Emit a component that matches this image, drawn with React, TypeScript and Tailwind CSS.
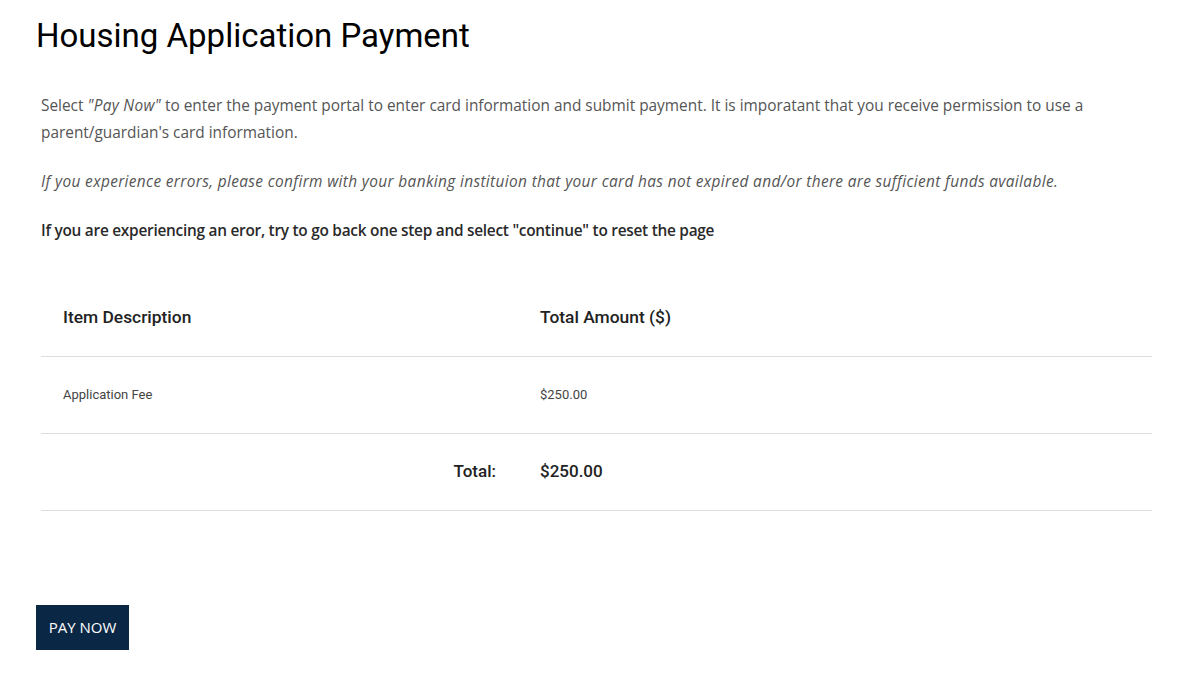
export default function App() {
  return (
    <div className="min-h-screen bg-white px-9 pt-[14px] font-['Open_Sans',sans-serif]">
      <h1 className="font-['Roboto',sans-serif] text-[33px] font-normal leading-[44px] text-black">
        Housing Application Payment
      </h1>

      <div className="mt-[34px] pl-[5px] text-[15.4px] text-[#555]">
        <p className="leading-[27px]">
          Select <em className="tracking-[0.3px]">"Pay Now"</em> to enter the payment portal to enter card information and submit payment. It is imporatant that you receive permission to use a parent/guardian's card information.
        </p>
        <p className="mt-[22px] italic leading-[27px] tracking-[0.36px]">
          If you experience errors, please confirm with your banking instituion that your card has not expired and/or there are sufficient funds available.
        </p>
        <p className="mt-[22px] font-semibold leading-[27px] tracking-[-0.26px] text-[#2a2a2a]">
          If you are experiencing an eror, try to go back one step and select "continue" to reset the page
        </p>
      </div>

      <table className="mt-[35px] ml-[5px] w-[1111px] border-collapse font-['Roboto',sans-serif]">
        <thead>
          <tr className="border-b border-[#ddd]">
            <th className="h-[77px] w-[477px] pl-[22px] text-left text-[17.4px] font-medium text-[#222]">Item Description</th>
            <th className="h-[77px] pl-[22px] text-left text-[17.4px] font-medium text-[#222]">Total Amount ($)</th>
          </tr>
        </thead>
        <tbody>
          <tr className="border-b border-[#ddd]">
            <td className="h-[77px] pl-[22px] text-[13px] text-[#444]">Application Fee</td>
            <td className="h-[77px] pl-[22px] text-[13px] text-[#444]">$250.00</td>
          </tr>
          <tr className="border-b border-[#ddd]">
            <td className="h-[77px] pr-[22px] text-right text-[17px] font-medium text-[#222]">Total:</td>
            <td className="h-[77px] pl-[22px] text-[17px] font-medium text-[#222]">$250.00</td>
          </tr>
        </tbody>
      </table>

      <button
        type="button"
        className="mt-[94px] h-[45px] w-[93px] bg-[#0b2746] text-[15px] text-white"
      >
        PAY NOW
      </button>
    </div>
  );
}
